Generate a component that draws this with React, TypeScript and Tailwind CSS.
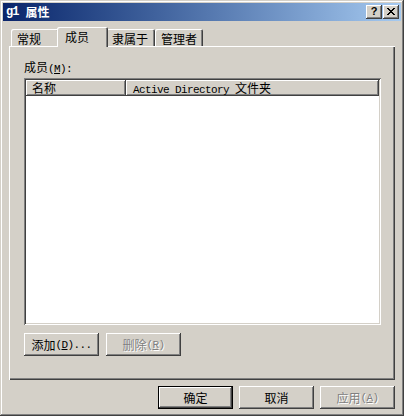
import React from 'react';

const cjk = "font-['Noto_Sans_CJK_SC',sans-serif]";
const latin = "font-['Liberation_Mono',monospace] text-[11px] tracking-[-0.6px]";
const raised =
  'shadow-[inset_-1px_-1px_0_#404040,inset_1px_1px_0_#ffffff,inset_-2px_-2px_0_#808080]';
const disabled = 'text-[#808080] [text-shadow:1px_1px_0_#ffffff]';

function Hotkey({ k }: { k: string }) {
  return (
    <span className={latin}>
      (<span className="underline underline-offset-1">{k}</span>)
    </span>
  );
}

function Button({
  children,
  isDefault,
  off,
}: {
  children: React.ReactNode;
  isDefault?: boolean;
  off?: boolean;
}) {
  return (
    <div
      className={`w-[75px] h-[23px] flex items-center justify-center bg-[#d4d0c8] text-[12px] leading-[14px] ${raised} ${
        isDefault ? 'border border-black' : ''
      } ${off ? disabled : 'text-black'}`}
    >
      {children}
    </div>
  );
}

const tabs = [
  { label: '常规', w: 'w-[48px]' },
  { label: '成员', w: 'w-[51px]', active: true },
  { label: '隶属于', w: 'w-[49px]' },
  { label: '管理者', w: 'w-[48px]' },
];

export default function App() {
  return (
    <div
      className={`w-[404px] h-[416px] bg-[#d4d0c8] p-[3px] flex flex-col select-none ${cjk} shadow-[inset_-1px_-1px_0_#404040,inset_1px_1px_0_#d4d0c8,inset_-2px_-2px_0_#808080,inset_2px_2px_0_#ffffff]`}
    >
      {/* Title bar */}
      <div className="h-[18px] flex items-center bg-linear-to-r from-[#0a246a] to-[#a6caf0] pl-[3px] pr-[2px]">
        <span className="text-white font-bold text-[12px] leading-[14px] flex items-center">
          <span className="font-['Liberation_Mono',monospace] text-[12px] tracking-[-1px]">g1</span>
          <span className="ml-[7px]">属性</span>
        </span>
        <div className="ml-auto flex gap-[1px]">
          <div className={`w-[16px] h-[14px] bg-[#d4d0c8] ${raised} flex items-center justify-center`}>
            <span className="font-['Liberation_Sans',sans-serif] font-bold text-[11px] leading-[11px] text-black -mt-[1px]">
              ?
            </span>
          </div>
          <div className={`w-[16px] h-[14px] bg-[#d4d0c8] ${raised} flex items-center justify-center`}>
            <svg width="8" height="7" viewBox="0 0 8 7" shapeRendering="crispEdges" className="-mt-[1px]">
              <path d="M0 0h2v1h-2zM6 0h2v1h-2zM1 1h2v1h-2zM5 1h2v1h-2zM2 2h4v1h-4zM3 3h2v1h-2zM2 4h4v1h-4zM1 5h2v1h-2zM5 5h2v1h-2zM0 6h2v1h-2zM6 6h2v1h-2z" fill="#000" />
            </svg>
          </div>
        </div>
      </div>

      <div className="px-[6px] mt-[6px]">
        {/* Tabs */}
        <div className="flex items-end h-[19px] pl-[2px]">
          {tabs.map((t) =>
            t.active ? (
              <div
                key={t.label}
                className={`${t.w} h-[20px] -mx-[2px] -mb-[1px] relative z-10 bg-[#d4d0c8] rounded-t-[2px] shadow-[inset_1px_1px_0_#ffffff,inset_-1px_0_0_#404040,inset_-2px_0_0_#808080] pl-[8px] pt-[3px] text-[12px] leading-[14px] text-black`}
              >
                {t.label}
              </div>
            ) : (
              <div
                key={t.label}
                className={`${t.w} h-[17px] bg-[#d4d0c8] rounded-t-[2px] shadow-[inset_1px_1px_0_#ffffff,inset_-1px_0_0_#404040,inset_-2px_0_0_#808080] pl-[6px] pt-[3px] text-[12px] leading-[14px] text-black`}
              >
                {t.label}
              </div>
            )
          )}
        </div>

        {/* Panel */}
        <div className="h-[334px] bg-[#d4d0c8] pl-[15px] pt-[14px] shadow-[inset_1px_1px_0_#ffffff,inset_-1px_-1px_0_#404040,inset_-2px_-2px_0_#808080]">
          <div className="text-[12px] leading-[14px] text-black">
            成员<Hotkey k="M" />
            <span className={latin}>:</span>
          </div>

          {/* List view */}
          <div className="mt-[2px] w-[357px] h-[247px] p-[2px] bg-white shadow-[inset_1px_1px_0_#808080,inset_-1px_-1px_0_#ffffff,inset_2px_2px_0_#404040,inset_-2px_-2px_0_#d4d0c8]">
            <div className="flex h-[16px] text-[12px] leading-[14px] text-black">
              <div className={`w-[100px] h-full bg-[#d4d0c8] ${raised} pl-[6px] pt-[1px]`}>名称</div>
              <div className={`flex-1 h-full bg-[#d4d0c8] ${raised} pl-[7px] pt-[1px]`}>
                <span className={latin}>Active Directory </span>文件夹
              </div>
            </div>
          </div>

          <div className="flex gap-[7px] mt-[8px]">
            <Button>
              添加<Hotkey k="D" />
              <span className={latin}>...</span>
            </Button>
            <Button off>
              删除<Hotkey k="R" />
            </Button>
          </div>
        </div>
      </div>

      {/* Dialog buttons */}
      <div className="flex justify-end gap-[6px] mt-[6px] pr-[6px]">
        <Button isDefault>确定</Button>
        <Button>取消</Button>
        <Button off>
          应用<Hotkey k="A" />
        </Button>
      </div>
    </div>
  );
}
